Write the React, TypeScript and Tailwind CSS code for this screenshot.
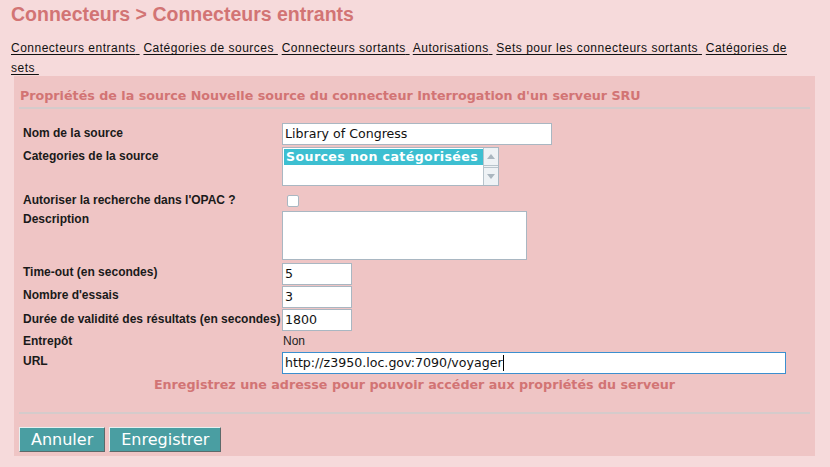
import React from "react";

const links = [
  "Connecteurs entrants",
  "Catégories de sources",
  "Connecteurs sortants",
  "Autorisations",
  "Sets pour les connecteurs sortants",
  "Catégories de sets",
];

const label =
  "font-['Liberation_Sans',Arial,sans-serif] text-[12px] leading-[14px] font-bold text-[#1a1a1a] w-[259px] shrink-0";
const field =
  "h-[22px] bg-white border border-[#a9b7c2] font-['DejaVu_Sans',sans-serif] text-[12.6px] text-[#111] px-[2px] flex items-center";

function Row({ name, h, pt = 2, children }: { name: string; h: number; pt?: number; children?: React.ReactNode }) {
  return (
    <div className="flex" style={{ height: h }}>
      <div className={label} style={{ paddingTop: pt }}>
        {name}
      </div>
      <div>{children}</div>
    </div>
  );
}

export default function App() {
  return (
    <div className="w-[830px] h-[467px] bg-[#f6dadb] overflow-hidden">
      <h1 className="pl-[11px] pt-[3px] font-['Liberation_Sans',Arial,sans-serif] text-[19.5px] font-bold text-[#d27474] leading-[22px]">
        Connecteurs &gt; Connecteurs entrants
      </h1>
      <div className="mt-[13px] pl-[11px] w-[800px] font-['Liberation_Sans',Arial,sans-serif] text-[12px] leading-[20px] text-[#111] tracking-[0.5px]">
        {links.map((l) => (
          <React.Fragment key={l}>
            <a className="underline underline-offset-2">{l}&nbsp;</a>{" "}
          </React.Fragment>
        ))}
      </div>
      <div className="-mt-[2px] ml-[14px] w-[801px] h-[380px] bg-[#efc5c5] px-[5px]">
        <div className="pt-[10px] pl-[1px] font-['DejaVu_Sans',sans-serif] text-[12.7px] font-bold text-[#d27474] leading-[20px]">
          Propriétés de la source Nouvelle source du connecteur Interrogation d'un serveur SRU
        </div>
        <div className="h-[2px] bg-[#d5cbcb] mt-[1px]" />
        <div className="pl-[4px] mt-[14px]">
          <Row name="Nom de la source" h={24} pt={3}>
            <div className={field + " w-[270px]"}>Library of Congress</div>
          </Row>
          <Row name="Categories de la source" h={41} pt={2}>
            <div className="w-[217px] h-[39px] bg-white border border-[#a9b7c2] flex">
              <div className="flex-1 pt-[1px] pl-[1px] overflow-hidden">
                <div className="bg-[#3dbfd1] text-white whitespace-nowrap font-['DejaVu_Sans',sans-serif] font-bold text-[12.6px] tracking-[0.4px] leading-[16px] pl-[2px]">
                  Sources non catégorisées
                </div>
              </div>
              <div className="w-[15px] flex flex-col bg-[#eef2f5] border-l border-[#b8c4cc]">
                <div className="h-[18px] border-b border-[#b8c4cc] flex items-center justify-center">
                  <svg width="8" height="5" viewBox="0 0 8 5">
                    <path d="M0 5 L4 0 L8 5 Z" fill="#aab6bf" />
                  </svg>
                </div>
                <div className="flex-1" />
                <div className="h-[18px] border-t border-[#b8c4cc] flex items-center justify-center">
                  <svg width="8" height="5" viewBox="0 0 8 5">
                    <path d="M0 0 L4 5 L8 0 Z" fill="#aab6bf" />
                  </svg>
                </div>
              </div>
            </div>
          </Row>
          <Row name="Autoriser la recherche dans l'OPAC ?" h={23} pt={5}>
            <div className="ml-[5px] mt-[7px] w-[12px] h-[12px] bg-white border border-[#a9b7c2] rounded-[2px]" />
          </Row>
          <Row name="Description" h={52} pt={1}>
            <div className="w-[245px] h-[49px] bg-white border border-[#a9b7c2]" />
          </Row>
          <Row name="Time-out (en secondes)" h={23} pt={2}>
            <div className={field + " w-[70px]"}>5</div>
          </Row>
          <Row name="Nombre d'essais" h={23} pt={2}>
            <div className={field + " w-[70px]"}>3</div>
          </Row>
          <Row name="Durée de validité des résultats (en secondes)" h={23} pt={3}>
            <div className={field + " w-[70px]"}>1800</div>
          </Row>
          <Row name="Entrepôt" h={20} pt={2}>
            <div className="pt-[2px] pl-[1px] font-['Liberation_Sans',Arial,sans-serif] text-[12px] leading-[14px] text-[#222]">Non</div>
          </Row>
          <Row name="URL" h={24} pt={2}>
            <div className="w-[504px] h-[22px] bg-white border border-[#3b8fcf] font-['DejaVu_Sans',sans-serif] text-[12.6px] text-[#111] px-[2px] flex items-center">
              http://z3950.loc.gov:7090/voyager
              <span className="inline-block w-[1px] h-[16px] bg-black" />
            </div>
          </Row>
        </div>
        <div className="-mt-[1px] text-center font-['DejaVu_Sans',sans-serif] text-[12.7px] font-bold text-[#d27474] leading-[20px]">
          Enregistrez une adresse pour pouvoir accéder aux propriétés du serveur
        </div>
        <div className="h-[2px] bg-[#d5cbcb] mt-[17px]" />
        <div className="flex gap-[4px] mt-[13px]">
          <button className="h-[25px] px-[11px] bg-[#4a9ea2] text-white font-['DejaVu_Sans',sans-serif] text-[16px] leading-[23px] border border-t-[#e6f0f0] border-l-[#e6f0f0] border-r-[#5c6a6a] border-b-[#5c6a6a]">
            Annuler
          </button>
          <button className="h-[25px] px-[11px] bg-[#4a9ea2] text-white font-['DejaVu_Sans',sans-serif] text-[16px] leading-[23px] border border-t-[#e6f0f0] border-l-[#e6f0f0] border-r-[#5c6a6a] border-b-[#5c6a6a]">
            Enregistrer
          </button>
        </div>
      </div>
    </div>
  );
}
